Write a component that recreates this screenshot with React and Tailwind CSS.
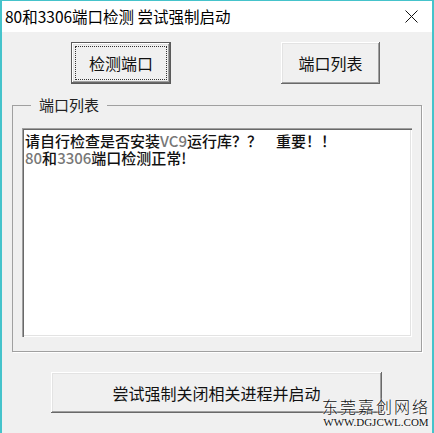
const cjk = { fontFamily: '"Noto Sans CJK SC", "Liberation Sans", sans-serif' };

function ClassicButton({ children, isDefault, className }) {
  if (isDefault) {
    return (
      <div className={`border border-[#5a5a5a] bg-[#f0f0f0] ${className}`}>
        <div className="h-full shadow-[inset_-1px_-1px_#696969,inset_1px_1px_#fff,inset_-2px_-2px_#a0a0a0,inset_2px_2px_#e3e3e3] p-[3px]">
          <div className="h-full border border-dotted border-[#333] flex items-center justify-center text-[16px] text-[#111]">
            {children}
          </div>
        </div>
      </div>
    );
  }
  return (
    <div
      className={`bg-[#f0f0f0] shadow-[inset_-1px_-1px_#696969,inset_1px_1px_#fff,inset_-2px_-2px_#a0a0a0,inset_2px_2px_#e3e3e3] flex items-center justify-center text-[16px] text-[#111] ${className}`}
    >
      {children}
    </div>
  );
}

export default function App() {
  return (
    <div
      className="w-[434px] h-[433px] flex flex-col border-t border-l-2 border-r-2 border-[#45c3cb] bg-[#f0f0f0] relative overflow-hidden"
      style={cjk}
    >
      {/* title bar */}
      <div className="h-[31px] bg-white flex items-center justify-between pl-[3px] pr-[14px]">
        <span className="text-[15.5px] text-black leading-none">80和3306端口检测 尝试强制启动</span>
        <svg width="13" height="13" viewBox="0 0 13 13">
          <path d="M0.5 0.5L12.5 12.5M12.5 0.5L0.5 12.5" stroke="#111" strokeWidth="1" />
        </svg>
      </div>

      {/* client area */}
      <div className="flex-1 flex flex-col">
        <div className="flex pt-[10px] pl-[69px] gap-[110px]">
          <ClassicButton isDefault className="w-[100px] h-[42px]">检测端口</ClassicButton>
          <ClassicButton className="w-[99px] h-[42px]">端口列表</ClassicButton>
        </div>

        <fieldset className="ml-[10px] mt-[12px] w-[410px] border border-[#a0a0a0] shadow-[1px_1px_0_#fff] px-[9px] pb-[14px]">
          <legend className="ml-[9px] px-[8px] text-[15px] leading-[18px] text-[#222]">端口列表</legend>
          <div className="mt-[14px] w-[390px] h-[209px] bg-white shadow-[inset_1px_1px_#a0a0a0,inset_2px_2px_#696969,inset_-1px_-1px_#fff,inset_-2px_-2px_#e3e3e3] pt-[4px] pl-[3px] text-[15px] leading-[17px] font-medium text-[#111]">
            <div>
              请自行检查是否安装<span className="text-[#777]">VC9</span>运行库？？<span className="inline-block w-[14px]" />重要！！
            </div>
            <div>
              <span className="text-[#777]">80</span>和<span className="text-[#777]">3306</span>端口检测正常!
            </div>
          </div>
        </fieldset>

        <div className="pl-[49px] mt-[20px]">
          <ClassicButton className="w-[331px] h-[41px]">尝试强制关闭相关进程并启动</ClassicButton>
        </div>
      </div>

      {/* watermark */}
      <div className="absolute left-[320px] top-[395px] flex flex-col items-center whitespace-nowrap [text-shadow:0_0_2px_#fff,0_0_2px_#fff]">
        <span className="text-[16px] leading-[20px] tracking-[2px] text-[#111] font-light">东莞嘉创网络</span>
        <span className="text-[11px] leading-[12px] text-[#111]" style={{ fontFamily: '"Liberation Serif", serif' }}>
          WWW.DGJCWL.COM
        </span>
      </div>
    </div>
  );
}
